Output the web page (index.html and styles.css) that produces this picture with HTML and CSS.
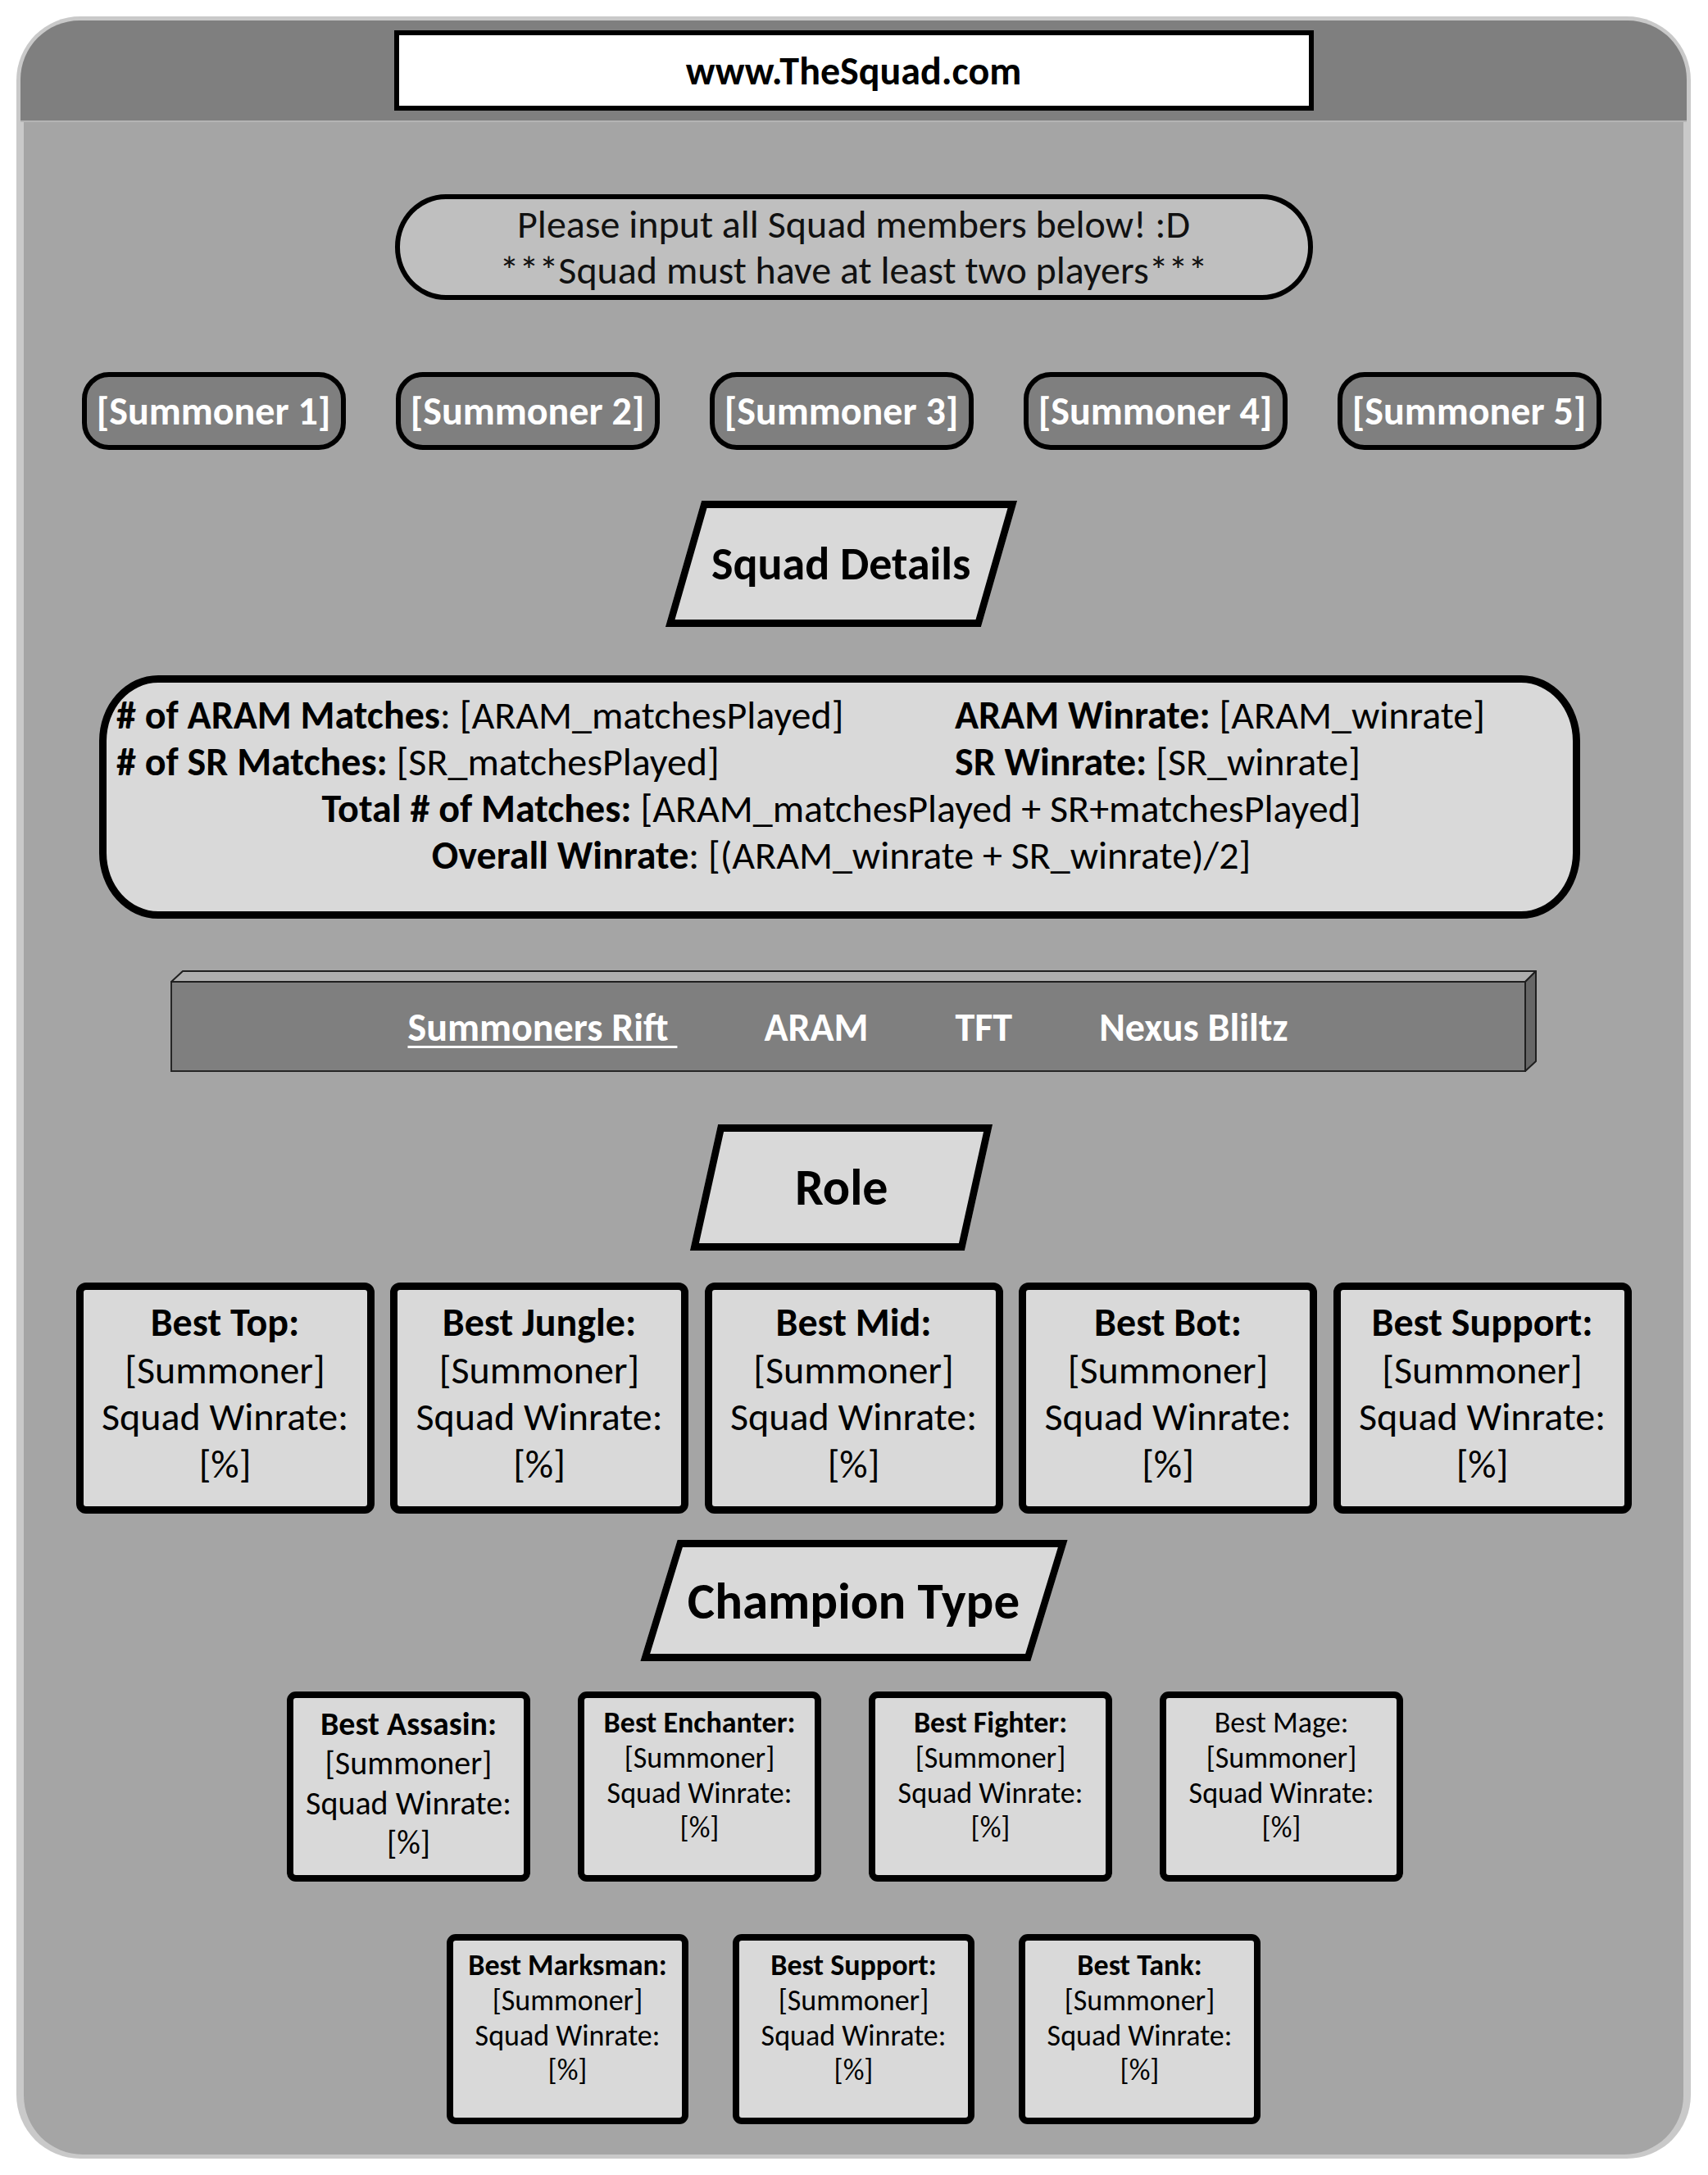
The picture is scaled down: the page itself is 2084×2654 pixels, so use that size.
FILE: index.html
```html
<!DOCTYPE html>
<html lang="en">
<head>
<meta charset="utf-8">
<title>The Squad</title>
<link rel="stylesheet" href="styles.css">
</head>
<body>
<div class="frame">
  <header class="header">
    <div class="url">www.TheSquad.com</div>
  </header>
  <main class="main">
    <div class="prompt">
      <p>Please input all Squad members below! :D</p>
      <p>***Squad must have at least two players***</p>
    </div>

    <div class="summoners">
      <div class="summoner">[Summoner 1]</div>
      <div class="summoner">[Summoner 2]</div>
      <div class="summoner">[Summoner 3]</div>
      <div class="summoner">[Summoner 4]</div>
      <div class="summoner">[Summoner 5]</div>
    </div>

    <div class="para para-squad"><span>Squad Details</span></div>

    <div class="details">
      <div class="details-grid">
        <div><b># of ARAM Matches</b>: [ARAM_matchesPlayed]</div>
        <div><b>ARAM Winrate:</b> [ARAM_winrate]</div>
        <div><b># of SR Matches:</b> [SR_matchesPlayed]</div>
        <div><b>SR Winrate:</b> [SR_winrate]</div>
      </div>
      <div class="details-center"><b>Total # of Matches:</b> [ARAM_matchesPlayed + SR+matchesPlayed]</div>
      <div class="details-center"><b>Overall Winrate</b>: [(ARAM_winrate + SR_winrate)/2]</div>
    </div>

    <nav class="navbar">
      <svg class="nav-3d" viewBox="0 0 1667 124" width="1667" height="124" aria-hidden="true">
        <rect x="1" y="14" width="1652" height="109" fill="#7f7f7f" stroke="#262626" stroke-width="2"/>
        <polygon points="1,14 15,1 1666,1 1653,14" fill="#adadad" stroke="#1f1f1f" stroke-width="2" stroke-linejoin="round"/>
        <polygon points="1653,14 1666,1 1666,111 1653,123" fill="#666666" stroke="#1f1f1f" stroke-width="2" stroke-linejoin="round"/>
      </svg>
      <div class="nav-links">
        <a class="nav-link active">Summoners Rift&nbsp;</a>
        <a class="nav-link">ARAM</a>
        <a class="nav-link">TFT</a>
        <a class="nav-link">Nexus Bliltz</a>
      </div>
    </nav>

    <div class="para para-role"><span>Role</span></div>

    <div class="roles">
      <div class="role-card"><b>Best Top:</b><span>[Summoner]</span><span>Squad Winrate:</span><span>[%]</span></div>
      <div class="role-card"><b>Best Jungle:</b><span>[Summoner]</span><span>Squad Winrate:</span><span>[%]</span></div>
      <div class="role-card"><b>Best Mid:</b><span>[Summoner]</span><span>Squad Winrate:</span><span>[%]</span></div>
      <div class="role-card"><b>Best Bot:</b><span>[Summoner]</span><span>Squad Winrate:</span><span>[%]</span></div>
      <div class="role-card"><b>Best Support:</b><span>[Summoner]</span><span>Squad Winrate:</span><span>[%]</span></div>
    </div>

    <div class="para para-champ"><span>Champion Type</span></div>

    <div class="champ-row champ-row-1">
      <div class="champ-card large"><b>Best Assasin:</b><span>[Summoner]</span><span>Squad Winrate:</span><span>[%]</span></div>
      <div class="champ-card"><b>Best Enchanter:</b><span>[Summoner]</span><span>Squad Winrate:</span><span>[%]</span></div>
      <div class="champ-card"><b>Best Fighter:</b><span>[Summoner]</span><span>Squad Winrate:</span><span>[%]</span></div>
      <div class="champ-card"><span>Best Mage:</span><span>[Summoner]</span><span>Squad Winrate:</span><span>[%]</span></div>
    </div>

    <div class="champ-row champ-row-2">
      <div class="champ-card narrow"><b>Best Marksman:</b><span>[Summoner]</span><span>Squad Winrate:</span><span>[%]</span></div>
      <div class="champ-card narrow"><b>Best Support:</b><span>[Summoner]</span><span>Squad Winrate:</span><span>[%]</span></div>
      <div class="champ-card narrow"><b>Best Tank:</b><span>[Summoner]</span><span>Squad Winrate:</span><span>[%]</span></div>
    </div>
  </main>
</div>
</body>
</html>
```

FILE: styles.css
```css
* { box-sizing: border-box; }

html, body {
  margin: 0;
  padding: 0;
  background: #ffffff;
}

body {
  font-family: "Carlito", "Lato", sans-serif;
  color: #000;
  width: 2084px;
  height: 2654px;
}

.frame {
  margin: 20px 0 0 20px;
  width: 2043px;
  height: 2614px;
  padding: 5px;
  background: #c9c9c9;
  border-radius: 78px;
  display: flex;
  flex-direction: column;
}

.header {
  height: 124px;
  background: #7f7f7f;
  border-radius: 72px 72px 0 0;
  border-bottom: 2px solid #b4b4b4;
  display: flex;
  justify-content: center;
  padding-top: 12px;
}

.url {
  width: 1122px;
  height: 98px;
  border: 6px solid #000;
  background: #fff;
  display: flex;
  align-items: center;
  justify-content: center;
  font-weight: 700;
  font-size: 48px;
}

.main {
  flex: 1;
  margin: 0 4px;
  background: #a5a5a5;
  border-radius: 0 0 72px 72px;
  display: flex;
  flex-direction: column;
  align-items: center;
}

/* prompt pill */
.prompt {
  margin-top: 88px;
  width: 1120px;
  height: 129px;
  border: 6px solid #000;
  border-radius: 62px / 64px;
  background: #bfbfbf;
  display: flex;
  flex-direction: column;
  align-items: center;
  justify-content: center;
  font-size: 48px;
  line-height: 56px;
  color: #111;
}
.prompt p { margin: 0; }

/* summoner buttons */
.summoners {
  margin-top: 88px;
  margin-right: 30px;
  display: flex;
  gap: 61px;
}
.summoner {
  width: 322px;
  height: 95px;
  border: 6px solid #000;
  border-radius: 33px;
  background: #7f7f7f;
  color: #fff;
  font-weight: 700;
  font-size: 48px;
  display: flex;
  align-items: center;
  justify-content: center;
}

/* parallelogram headings */
.para {
  border: 9px solid #000;
  background: #d9d9d9;
  display: flex;
  align-items: center;
  justify-content: center;
  font-weight: 700;
}
.para-squad {
  margin-top: 62px;
  margin-right: 30px;
  width: 385px;
  height: 154px;
  transform: skewX(-16deg);
  font-size: 56px;
}
.para-squad span { transform: skewX(16deg); }

.para-role {
  margin-top: 64px;
  margin-right: 30px;
  width: 335px;
  height: 154px;
  transform: skewX(-12.5deg);
  font-size: 62px;
}
.para-role span { transform: skewX(12.5deg); }

.para-champ {
  margin-top: 32px;
  width: 476px;
  height: 148px;
  transform: skewX(-17deg);
  font-size: 63px;
}
.para-champ span { transform: skewX(17deg); }

/* details card */
.details {
  margin-top: 59px;
  margin-right: 34px;
  width: 1807px;
  height: 297px;
  border: 9px solid #000;
  border-radius: 72px / 80px;
  background: #d9d9d9;
  padding: 12px 12px 0 12px;
  font-size: 48px;
  line-height: 1.185;
}
.details-grid {
  display: grid;
  grid-template-columns: 1023px auto;
}
.details-center {
  text-align: center;
  padding-left: 4px;
}

/* nav bar */
.navbar {
  margin-top: 63px;
  width: 1667px;
  height: 124px;
  position: relative;
  isolation: isolate;
}
.nav-3d {
  position: absolute;
  left: 0;
  top: 0;
  z-index: -1;
  display: block;
}
.nav-links {
  margin-top: 14px;
  width: 1653px;
  height: 110px;
  display: flex;
  align-items: center;
  justify-content: center;
  gap: 106px;
}
.nav-link {
  color: #fff;
  font-weight: 700;
  font-size: 48px;
  text-decoration: none;
}
.nav-link.active {
  text-decoration: underline;
  text-decoration-thickness: 3px;
  text-underline-offset: 6px;
}

/* role cards */
.roles {
  margin-top: 39px;
  display: flex;
  gap: 19.5px;
}
.role-card {
  width: 364px;
  height: 282px;
  border: 9px solid #000;
  border-radius: 12px;
  background: #d9d9d9;
  display: flex;
  flex-direction: column;
  align-items: center;
  padding-top: 11px;
  font-size: 48px;
  line-height: 1.2;
}

/* champion cards */
.champ-row {
  display: flex;
}
.champ-row-1 {
  margin-top: 37px;
  margin-right: 21px;
  gap: 58px;
}
.champ-row-2 {
  margin-top: 64px;
  gap: 54px;
}
.champ-card {
  width: 297px;
  height: 232px;
  border: 8px solid #000;
  border-radius: 11px;
  background: #d9d9d9;
  display: flex;
  flex-direction: column;
  align-items: center;
  padding-top: 9px;
  font-size: 36px;
  line-height: 1.19;
}
.champ-card.large {
  font-size: 40px;
  line-height: 1.21;
  padding-top: 8px;
}
.champ-card.narrow {
  width: 295px;
}
```
